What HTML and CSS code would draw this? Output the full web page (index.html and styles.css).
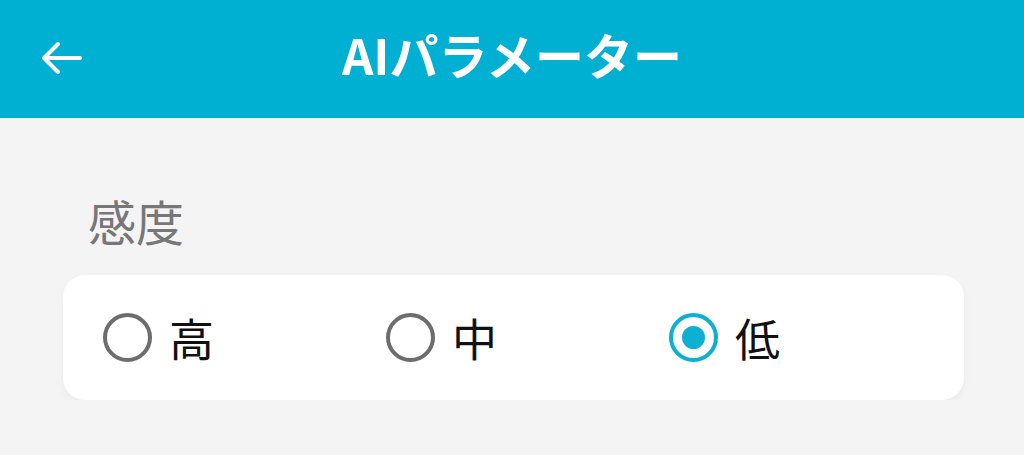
FILE: index.html
```html
<!DOCTYPE html>
<html lang="ja">
<head>
    <meta charset="UTF-8">
    <meta name="viewport" content="width=device-width, initial-scale=1.0">
    <title>AIパラメーター</title>
    <link rel="stylesheet" href="styles.css">
</head>
<body>
    <header class="app-bar">
        <button class="back-btn" aria-label="戻る">
            <svg viewBox="0 0 44 36" width="44" height="36">
                <path d="M41 18H5M19 4L5 18l14 14" fill="none" stroke="#fff" stroke-width="4" stroke-linecap="round" stroke-linejoin="round"/>
            </svg>
        </button>
        <h1 class="title">AIパラメーター</h1>
        <div class="spacer"></div>
    </header>

    <main class="content">
        <div class="section-label">感度</div>
        <div class="card">
            <label class="radio">
                <input type="radio" name="sens" value="high">
                <span class="ring"></span>
                <span class="text">高</span>
            </label>
            <label class="radio">
                <input type="radio" name="sens" value="mid">
                <span class="ring"></span>
                <span class="text">中</span>
            </label>
            <label class="radio">
                <input type="radio" name="sens" value="low" checked>
                <span class="ring"></span>
                <span class="text">低</span>
            </label>
        </div>
    </main>
</body>
</html>
```

FILE: styles.css
```css
body {
    margin: 0;
    background-color: #f4f4f4;
    font-family: "Noto Sans CJK JP", "Noto Sans", sans-serif;
}
.app-bar {
    height: 118px;
    background-color: #00b0d2;
    display: flex;
    align-items: center;
}
.back-btn {
    width: 124px;
    height: 118px;
    padding: 0 0 0 39px;
    border: none;
    background: none;
    display: flex;
    align-items: center;
    margin-top: -2px;
    cursor: pointer;
}
.title {
    flex: 1;
    margin: 0;
    text-align: center;
    color: #fff;
    font-size: 49px;
    font-weight: bold;
    line-height: 70px;
    margin-top: -10px;
}
.spacer {
    width: 124px;
}
.content {
    padding: 70px 60px 0 63px;
}
.section-label {
    color: #777;
    font-size: 48px;
    line-height: 64px;
    padding-left: 25px;
    margin-bottom: 23px;
}
.card {
    height: 125px;
    background-color: #fff;
    border-radius: 22px;
    box-shadow: 0 4px 8px rgba(0, 0, 0, 0.04);
    display: grid;
    grid-template-columns: 283px 283px 283px;
    padding-left: 40px;
    align-items: center;
}
.radio {
    display: flex;
    align-items: center;
    cursor: pointer;
}
.radio input {
    display: none;
}
.ring {
    width: 41px;
    height: 41px;
    border: 4px solid #6d6d6d;
    border-radius: 50%;
    display: flex;
    align-items: center;
    justify-content: center;
}
.radio input:checked + .ring {
    border-color: #0eb0d2;
}
.radio input:checked + .ring::after {
    content: "";
    width: 23px;
    height: 23px;
    border-radius: 50%;
    background-color: #0eb0d2;
}
.text {
    margin-left: 17px;
    font-size: 45px;
    color: #111;
    line-height: 60px;
    margin-top: 0;
}
```
